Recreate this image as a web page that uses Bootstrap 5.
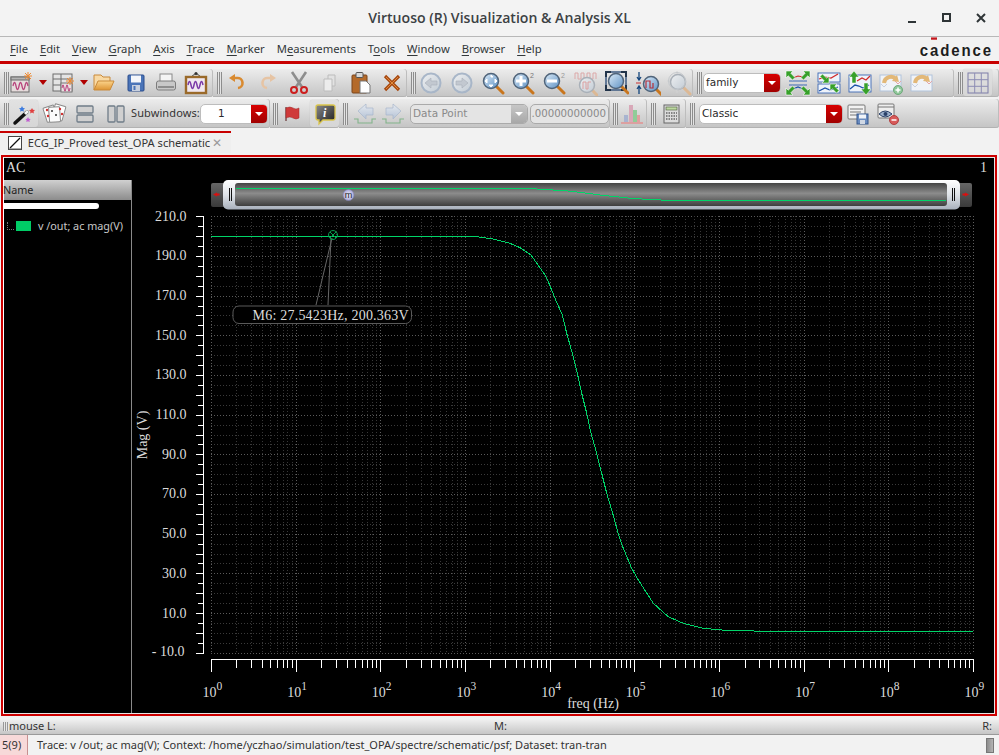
<!DOCTYPE html>
<html lang="en">
<head>
<meta charset="utf-8">
<title>Virtuoso (R) Visualization &amp; Analysis XL</title>
<link href="https://cdn.jsdelivr.net/npm/bootstrap@5.3.0/dist/css/bootstrap.min.css" rel="stylesheet">
<style>
html,body{width:999px;height:755px;overflow:hidden;margin:0;background:#f2f2f2;color:#2e3436;font-family:"Noto Sans","Open Sans",sans-serif;font-size:11.5px}
.defs-holder{position:absolute;width:0;height:0}
.titlebar{height:37px;border-bottom:1px solid #b8b8b8;background:#f3f3f3;padding-bottom:1px}
.wintitle{font-family:"Open Sans",sans-serif;font-weight:600;font-size:14.1px;color:#3c4143;flex:1;text-align:center}
.winbtns{position:absolute;right:0;top:0;height:36px;width:99px}
.winbtn{position:absolute;top:12px;width:12px;height:12px}
.winbtn.b1{left:7px}.winbtn.b2{left:41px}.winbtn.b3{left:75px}
.menubar{height:24px;background:#f2f2f2;padding:2px 0 0 10px}
.menuitem{margin-right:11.9px;color:#33383a;white-space:nowrap;font-size:11.25px}
.menuitem u{text-decoration-thickness:1px;text-underline-offset:2px}
.brand{margin-left:auto;margin-right:6px;font-family:"Liberation Sans",sans-serif;font-weight:700;font-size:15px;letter-spacing:1.9px;color:#1d1d1d;position:relative;line-height:1;transform:scaleY(1.15)}
.brand-a{position:relative}
.brand-a::before{content:"";position:absolute;left:1px;right:3px;top:-2px;height:2px;background:#c4161c}
.redbar{height:3px;background:#c80000}
.gap5{height:5px}
.tbrow{height:29px}
.tbrow2{height:29px;margin-top:2px}
.sec{height:100%;flex:none;background:linear-gradient(#ececec,#c4c4c4);border-radius:0 3px 3px 0;box-shadow:inset -1px 0 0 #bdbdbd,inset 0 -1px 0 #b2b2b2;display:flex;align-items:center}
.grip{width:5px;height:22px;margin-left:4px;flex:none;background:repeating-linear-gradient(90deg,#8d8d8d 0 1px,#e4e4e4 1px 2px)}
.gs{margin-left:3px}
.tool{flex:none;height:27px;padding:0;border:0;border-radius:3px;display:flex;align-items:center;justify-content:center;background:transparent}
.tool svg{display:block;flex:none}
.on{background:linear-gradient(#e2e2e2,#d6d6d6);box-shadow:0 0 1px #aaa}
.w18{width:18px}.w19{width:19px}.w20{width:20px}.w21{width:21px}.w24{width:24px}.w28{width:28px}.w29{width:29px}.w30{width:30px}.w31{width:31px}.sp7{width:7px;flex:none}.sp3{width:3px;flex:none}.sp1{width:1px;flex:none}.sp2{width:2px;flex:none}.sp4{width:4px;flex:none}
.s213{width:213px}.s194{width:194px}.s286{width:286px}.s261{width:261px}.s45{width:45px}
.s270{width:270px}.s69{width:69px}.s271{width:271px}.s37{width:37px}.s39{width:39px}.s313{width:313px}
.combo{height:20px;flex:none;background:#fff;border:1px solid #bdbdbd;border-radius:5px;display:flex;align-items:center;overflow:hidden;color:#2a2a2a;font-family:"DejaVu Sans",sans-serif;font-size:10.5px}
.combo-txt{flex:1;padding-left:2px;white-space:nowrap;overflow:hidden}
.caret-box{width:16px;height:100%;background:linear-gradient(#d80000,#a00000);display:flex;align-items:center;justify-content:center}
.caret-box i{display:block;width:0;height:0;border-left:4px solid transparent;border-right:4px solid transparent;border-top:4px solid #fff}
.c78{width:78px}.c68{width:68px}.c118{width:118px}.c144{width:144px}.c79{width:79px}
.dis{background:#e4e4e4;color:#8a8a8a;border-color:#aaa}
.dis .caret-box{background:linear-gradient(#c6c6c6,#a8a8a8)}
.spin{font-size:10.2px;justify-content:flex-end;padding-right:2px;white-space:nowrap}
.sublabel{width:68px;flex:none;font-size:11px;letter-spacing:.1px;color:#333;white-space:nowrap}
.tabrow{height:22px;margin-top:3px}
.doctab{width:231px;height:22px;border-top:2px solid #c80000;background:#efefef;padding-left:8px;font-size:11.1px;color:#333;white-space:nowrap}
.tabx{color:#9a9a9a;font-size:12px;margin-left:2px}
.frame{height:561px;margin:2px 2px 0 1px;border:2px solid #cc0000;background:#000}
.frame-in{height:100%;border:1px solid #e6e6e6;border-left-color:#fff;background:#000;display:flex;flex-direction:column}
.plothead{height:22px;flex:none;color:#ddd;font-family:"Liberation Serif",serif;font-size:14px;padding:0 7px 4px 2px}
.plotbody{flex:1;min-height:0}
.legend{width:128px;flex:none;border-right:1px solid #8a8a8a;color:#c8c8c8;font-size:10.8px}
.legend-h{height:20px;background:linear-gradient(#d0d0d0,#8c8c8c);color:#222;text-indent:-1px}
.legend-s{height:6px;width:95px;background:#fff;border-radius:0 3px 3px 0;margin-top:3px}
.legend-r{height:14px;margin-top:10px;padding-left:3px}
.tree{width:7px;height:8px;flex:none;border-left:1px dotted #777;border-bottom:1px dotted #777;margin-right:2px}
.swatch{width:15px;height:10px;background:#00cc66;margin-right:7px;flex:none}
.plotsvg{display:block;flex:1;width:862px;height:533px;background:#000}
.statA{height:17px;margin-top:2px;background:linear-gradient(#f4f4f4,#c6c6c6);border-bottom:1px solid #9a9a9a;font-size:11px;padding:0 7px 0 3px;color:#333}
.statL{width:491px;flex:none}
.statM{flex:1}
.sgrip{width:6px;height:9px;background:repeating-linear-gradient(90deg,#999 0 1px,#e8e8e8 1px 2px)}
.statB{height:20px;background:#f2f2f2;font-size:11px;color:#333}
.count{width:28px;height:100%;background:#f7d9d9;border-right:1px solid #c89090;padding-left:2px}
.statmsg{padding-left:9px;white-space:nowrap}
.endgrip{width:8px;height:15px;margin-left:auto;margin-right:5px;background:linear-gradient(90deg,#8c8c8c,#b4b4b4);border:1px solid #777}
</style>
</head>
<body class="d-flex flex-column">

<svg class="defs-holder" aria-hidden="true">
<defs>
<linearGradient id="lens" x1="0" y1="0" x2="1" y2="1"><stop offset="0" stop-color="#dcebf8"/><stop offset="1" stop-color="#5f92c4"/></linearGradient>
<linearGradient id="lensd" x1="0" y1="0" x2="1" y2="1"><stop offset="0" stop-color="#eef0f2"/><stop offset="1" stop-color="#c2cbd4"/></linearGradient>
<linearGradient id="orange" x1="0" y1="0" x2="0" y2="1"><stop offset="0" stop-color="#fbd48c"/><stop offset="1" stop-color="#dd9433"/></linearGradient>
<linearGradient id="blk" x1="0" y1="0" x2="1" y2="1"><stop offset="0" stop-color="#8a8a8a"/><stop offset="1" stop-color="#1c1c1c"/></linearGradient>
<linearGradient id="pale" x1="0" y1="0" x2="0" y2="1"><stop offset="0" stop-color="#e6eaf0"/><stop offset="1" stop-color="#b5c3d6"/></linearGradient>
<g id="mag"><line x1="15" y1="15" x2="22" y2="22" stroke="#c9761e" stroke-width="3" stroke-linecap="round"/><circle cx="10" cy="10" r="7.5" fill="url(#lens)" stroke="#50647a" stroke-width="1.500"/></g>
<g id="magd"><line x1="15" y1="15" x2="22" y2="22" stroke="#dcb894" stroke-width="3" stroke-linecap="round"/><circle cx="10" cy="10" r="7.5" fill="url(#lensd)" stroke="#a9b0b8" stroke-width="1.500"/></g>
<g id="navc"><circle cx="13" cy="13" r="9.5" fill="url(#lensd)" stroke="#a8b6c8" stroke-width="2"/></g>
<g id="curl"><path d="M6 13a7 7 0 0 1 12-4" fill="none" stroke="#e2b878" stroke-width="4"/><path d="M21 12l-7-1 5-6z" fill="#e2b878"/></g>
<path id="garrow" d="M0 0h7L4.800 2.200 9 6.500 6.500 9 2.200 4.800 0 7z" fill="#37a02a" stroke="#fff" stroke-width=".6"/>
</defs>
</svg>

<header class="titlebar d-flex align-items-center position-relative">
  <div class="wintitle">Virtuoso (R) Visualization &amp; Analysis XL</div>
  <div class="winbtns" aria-hidden="true">
    <svg class="winbtn b1" viewBox="0 0 12 12"><rect x="1" y="9" width="8" height="2" fill="#2e3436"/></svg>
    <svg class="winbtn b2" viewBox="0 0 12 12"><rect x="2" y="2" width="7" height="7" fill="none" stroke="#2e3436" stroke-width="2"/></svg>
    <svg class="winbtn b3" viewBox="0 0 12 12"><path d="M2 2l8 8M10 2l-8 8" stroke="#2e3436" stroke-width="2"/></svg>
  </div>
</header>

<nav class="menubar d-flex align-items-center">
  <span class="menuitem"><u>F</u>ile</span>
  <span class="menuitem"><u>E</u>dit</span>
  <span class="menuitem"><u>V</u>iew</span>
  <span class="menuitem"><u>G</u>raph</span>
  <span class="menuitem"><u>A</u>xis</span>
  <span class="menuitem"><u>T</u>race</span>
  <span class="menuitem"><u>M</u>arker</span>
  <span class="menuitem">M<u>e</u>asurements</span>
  <span class="menuitem">T<u>o</u>ols</span>
  <span class="menuitem"><u>W</u>indow</span>
  <span class="menuitem"><u>B</u>rowser</span>
  <span class="menuitem"><u>H</u>elp</span>
  <span class="brand">c<span class="brand-a">a</span>dence</span>
</nav>
<div class="redbar"></div>
<div class="gap5"></div>

<div class="tbrow d-flex">
  <div class="sec s213">
    <span class="grip"></span>
    <button class="tool w24" aria-label="New window"><svg width="24" height="24" viewBox="0 0 24 24"><rect x="2" y="6" width="18" height="15" fill="#e6dcdc" stroke="#6d6d6d"/><rect x="2" y="6" width="18" height="3" fill="#b4b4b4" stroke="#6d6d6d"/><path d="M4 15q1.5-7 3 0t3 0 3 0 3 0 3 0" fill="none" stroke="#b8457d" stroke-width="1.3"/><path d="M19 1v8M15 5h8M16 2l6 6M22 2l-6 6" stroke="#ee8a32" stroke-width="1"/></svg></button>
    <button class="tool w20" aria-label="Menu"><svg width="10" height="8" viewBox="0 0 10 8"><path d="M1 1h8L5 6z" fill="#b00000"/></svg></button>
    <button class="tool w21" aria-label="New subwindow"><svg width="24" height="24" viewBox="0 0 24 24"><rect x="1" y="3" width="19" height="17" fill="#e4e4e4" stroke="#6d6d6d"/><path d="M1 8h19M9 3v17M1 14h8" stroke="#6d6d6d"/><rect x="9" y="12" width="11" height="9" fill="#eadfe2" stroke="#777"/><path d="M10 17q1-6 2 0t2 0 2 0 2 0" fill="none" stroke="#b8457d" stroke-width="1.1"/><path d="M18 6v8M14 10h8M15 7l6 6M21 7l-6 6" stroke="#ee8a32" stroke-width="1"/></svg></button>
    <button class="tool w20" aria-label="Menu"><svg width="10" height="8" viewBox="0 0 10 8"><path d="M1 1h8L5 6z" fill="#b00000"/></svg></button>
    <button class="tool w19" aria-label="Open"><svg width="22" height="20" viewBox="0 0 22 20"><path d="M1 17V2h7l2 2h7v4" fill="#f8d9a4" stroke="#c98a3a"/><path d="M1 17l4-9h16l-4 9z" fill="url(#orange)" stroke="#c98a3a"/></svg></button>
    <span class="sp7"></span>
    <button class="tool w31" aria-label="Save"><svg width="20" height="20" viewBox="0 0 20 20"><rect x="2" y="2" width="16" height="16" rx="1" fill="#4a74b8" stroke="#2a4c8c"/><rect x="5" y="2.5" width="10" height="7" fill="#f4f6fa"/><rect x="6" y="12" width="8" height="6" fill="#c8d0de"/><rect x="7.5" y="13" width="2" height="4" fill="#4a74b8"/></svg></button>
    <button class="tool w30" aria-label="Print"><svg width="22" height="22" viewBox="0 0 22 22"><rect x="5" y="2" width="12" height="9" fill="#f4f4f4" stroke="#8a8a8a"/><rect x="1.500" y="9" width="19" height="9" rx="2" fill="#c8c8c8" stroke="#7c7c7c"/><rect x="3" y="14" width="16" height="2" fill="#8e8e8e"/></svg></button>
    <button class="tool w30" aria-label="Print plot"><svg width="24" height="24" viewBox="0 0 24 24"><path d="M7 6l5-4 5 4" fill="none" stroke="#444"/><circle cx="12" cy="2.500" r="1.500" fill="#333"/><rect x="2" y="6" width="20" height="16" fill="#f0e8f0" stroke="#9a6a2a" stroke-width="2.400"/><path d="M4 14q1.500-7 3 0t3 0 3 0 3 0 3 0" fill="none" stroke="#7b3aa8" stroke-width="1.500"/></svg></button>
  </div>
  <div class="sec s194">
    <span class="grip"></span>
    <button class="tool w30" aria-label="Undo"><svg width="20" height="20" viewBox="0 0 20 20"><path d="M7 5h3a5 5 0 0 1 1 10" fill="none" stroke="#d98a30" stroke-width="2.600"/><path d="M8 1v8L2 5z" fill="#d98a30"/></svg></button>
    <button class="tool w31" aria-label="Redo"><svg width="20" height="20" viewBox="0 0 20 20"><path d="M13 5h-3a5 5 0 0 0-1 10" fill="none" stroke="#e6c4a4" stroke-width="2.600"/><path d="M12 1v8l6-4z" fill="#e6c4a4"/></svg></button>
    <button class="tool w31" aria-label="Cut"><svg width="22" height="24" viewBox="0 0 22 24"><path d="M4 1l10 15M18 1L8 16" stroke="#8d8d8d" stroke-width="2.600"/><circle cx="6" cy="19" r="3" fill="none" stroke="#cc1e1e" stroke-width="2"/><circle cx="16" cy="19" r="3" fill="none" stroke="#cc1e1e" stroke-width="2"/></svg></button>
    <button class="tool w31" aria-label="Copy"><svg width="20" height="20" viewBox="0 0 20 20"><path d="M8 2h7v11H8z" fill="#e2e2e2" stroke="#bcbcbc"/><path d="M4 6h8v12H4z" fill="#ececec" stroke="#bcbcbc"/></svg></button>
    <button class="tool w31" aria-label="Paste"><svg width="22" height="24" viewBox="0 0 22 24"><rect x="2" y="4" width="15" height="18" rx="1" fill="#b46a2a" stroke="#7a441a"/><rect x="6" y="1.500" width="7" height="5" rx="1" fill="#d8d8d8" stroke="#555"/><path d="M10 10h6l4 4v8H10z" fill="#fff" stroke="#777"/></svg></button>
    <button class="tool w31" aria-label="Delete"><svg width="18" height="18" viewBox="0 0 18 18"><path d="M2 2l14 14M16 2L2 16" stroke="#a84a12" stroke-width="3.200"/><path d="M3 3l12 12M15 3L3 15" stroke="#e08a3c" stroke-width="1"/></svg></button>
  </div>
  <div class="sec s286">
    <span class="grip"></span>
    <button class="tool w30" aria-label="Back"><svg width="26" height="26" viewBox="0 0 26 26"><use href="#navc"/><path d="M7 13l6-5v3h6v4h-6v3z" fill="#c2c8d0" stroke="#a8aeb8" stroke-width=".6"/></svg></button>
    <button class="tool w31" aria-label="Forward"><svg width="26" height="26" viewBox="0 0 26 26"><use href="#navc"/><path d="M19 13l-6-5v3H7v4h6v3z" fill="#c2c8d0" stroke="#a8aeb8" stroke-width=".6"/></svg></button>
    <button class="tool w31" aria-label="Zoom fit"><svg width="24" height="24" viewBox="0 0 24 24"><use href="#mag"/><path d="M10 4l2 2-2 0zM10 16l-2-2h4zM4 10l2-2v4zM16 10l-2 2V8z" fill="#fff" stroke="#fff"/></svg></button>
    <button class="tool w31" aria-label="Zoom in"><svg width="26" height="24" viewBox="0 0 26 24"><use href="#mag"/><path d="M5 10h10M10 5v10" stroke="#fff" stroke-width="3"/><text x="19" y="7" font-size="7" fill="#777" font-family="Liberation Sans">2</text></svg></button>
    <button class="tool w31" aria-label="Zoom out"><svg width="26" height="24" viewBox="0 0 26 24"><use href="#mag"/><path d="M5 10h10" stroke="#fff" stroke-width="3"/><text x="19" y="7" font-size="7" fill="#999" font-family="Liberation Sans">2</text></svg></button>
    <button class="tool w31" aria-label="Zoom pulse"><svg width="24" height="26" viewBox="0 0 24 26"><path d="M1 9V3h3v6h3V3h3v6h3V3h3v6h3V3h3v6" fill="none" stroke="#dca8a8"/><g transform="translate(3 5)"><use href="#magd"/><path d="M6 14V7h3v7h2V7h3" fill="none" stroke="#dca0a0"/></g></svg></button>
    <button class="tool w31" aria-label="Fit"><svg width="24" height="24" viewBox="0 0 24 24"><rect x="1" y="1" width="20" height="18" fill="none" stroke="#3c5a80" stroke-width="1.500"/><path d="M1 6V1h5M16 1h5v5M1 14v5h5M21 14v5h-5" fill="none" stroke="#22344a" stroke-width="2"/><g transform="translate(1 0)"><use href="#mag"/></g></svg></button>
    <button class="tool w31" aria-label="Zoom Y"><svg width="26" height="26" viewBox="0 0 26 26"><path d="M4 2v7M2 7l2 3 2-3M4 24v-7M2 19l2-3 2 3" stroke="#15457c" fill="none" stroke-width="1.300"/><path d="M1 13h5" stroke="#c83030"/><g transform="translate(6 4)"><use href="#mag"/><path d="M5 14v-3V7h4v7h3V9" fill="none" stroke="#b5303a" stroke-width="1.200"/></g></svg></button>
    <button class="tool w31" aria-label="Zoom cross"><svg width="26" height="26" viewBox="0 0 26 26"><path d="M11 1v22M1 11h20" stroke="#d2d2d2"/><g transform="translate(2 2)"><use href="#magd"/></g><circle cx="11" cy="11" r="8.500" fill="none" stroke="#c4c8cc"/></svg></button>
  </div>
  <div class="sec s261">
    <span class="grip"></span>
    <span class="sp1"></span>
    <div class="combo c78"><span class="combo-txt">family</span><span class="caret-box"><i></i></span></div>
    <span class="sp1"></span>
    <button class="tool w31" aria-label="Split traces"><svg width="26" height="26" viewBox="0 0 26 26"><path d="M4 11h18M4 15h18" stroke="#3c68b4"/><path d="M8 8l5-2 5 1" fill="none" stroke="#d02a2a" stroke-width="1.200"/><path d="M8 19l5-2 5 2" fill="none" stroke="#1b50a8" stroke-width="1.200"/><use href="#garrow" transform="translate(1 1)"/><use href="#garrow" transform="translate(25 1) scale(-1 1)"/><use href="#garrow" transform="translate(1 25) scale(1 -1)"/><use href="#garrow" transform="translate(25 25) scale(-1 -1)"/></svg></button>
    <button class="tool w31" aria-label="Merge traces"><svg width="26" height="26" viewBox="0 0 26 26"><rect x="2" y="3" width="22" height="9" fill="#eef3fa" stroke="#3c68b4" stroke-width=".9"/><rect x="2" y="14" width="22" height="9" fill="#eef3fa" stroke="#3c68b4" stroke-width=".9"/><path d="M3 9l6-2 6 1 7-4" fill="none" stroke="#d02a2a" stroke-width="1.200"/><path d="M3 21l6-3 5 2 8-3" fill="none" stroke="#1b50a8" stroke-width="1.200"/><use href="#garrow" transform="translate(13 13) scale(-1 -1)"/><use href="#garrow" transform="translate(14 14)"/></svg></button>
    <button class="tool w31" aria-label="Scale traces"><svg width="26" height="26" viewBox="0 0 26 26"><rect x="2" y="5" width="22" height="17" fill="#eef3fa" stroke="#3c68b4" stroke-width=".9"/><path d="M10 11l5-3 4 2 4-4" fill="none" stroke="#d02a2a" stroke-width="1.300"/><path d="M3 19l5-4 4 1 4 2 6-3" fill="none" stroke="#1b50a8" stroke-width="1.300"/><path d="M7 1l5 6H9v6H5V7H2z" fill="#37a02a" stroke="#fff" stroke-width=".5"/><path d="M19 25l5-6h-3v-6h-4v6h-3z" fill="#37a02a" stroke="#fff" stroke-width=".5"/></svg></button>
    <button class="tool w31" aria-label="Add trace"><svg width="26" height="26" viewBox="0 0 26 26"><rect x="2" y="5" width="21" height="16" fill="#f0f3f8" stroke="#b2c4dc"/><path d="M3 14l3 3 3-3" fill="none" stroke="#c8d0e0"/><path d="M17 11l3 3 3-3" fill="none" stroke="#e6a6a6"/><use href="#curl"/><circle cx="20" cy="20" r="4.500" fill="#8fc79a" stroke="#6ea87a"/><path d="M17.500 20h5M20 17.500v5" stroke="#fff" stroke-width="1.500"/></svg></button>
    <button class="tool w31" aria-label="Move trace"><svg width="26" height="26" viewBox="0 0 26 26"><rect x="2" y="5" width="21" height="16" fill="#f0f3f8" stroke="#b2c4dc"/><path d="M3 14l3 3 3-3" fill="none" stroke="#c8d0e0"/><path d="M17 11l3 3 3-3" fill="none" stroke="#e6a6a6"/><use href="#curl"/></svg></button>
  </div>
  <div class="sec s45">
    <span class="grip"></span>
    <button class="tool w29 on" aria-label="Grid"><svg width="24" height="24" viewBox="0 0 24 24"><rect x="2" y="2" width="20" height="20" fill="none" stroke="#7d7da8"/><path d="M8.700 2v20M15.300 2v20M2 8.700h20M2 15.300h20" stroke="#8d8db4"/></svg></button>
  </div>
</div>

<div class="tbrow2 d-flex">
  <div class="sec s270">
    <span class="grip"></span>
    <button class="tool w29 on" aria-label="Wand"><svg width="24" height="24" viewBox="0 0 24 24"><path d="M3 21L15 10" stroke="#111" stroke-width="3.500" stroke-linecap="round"/><path d="M13 12l3-3" stroke="#f4f4f4" stroke-width="3"/><path d="M10 4l1 2 2 .3-1.500 1.400.4 2-1.900-1-1.900 1 .4-2L7 6.300 9 6z" fill="#3c7ce0"/><path d="M20 6l1 1.800 2 .3-1.500 1.400.4 2-1.900-1-1.900 1 .4-2L17 8.100l2-.3z" fill="#e04040"/><path d="M16 15l.9 1.700 1.800.3-1.300 1.300.3 1.800-1.700-.9-1.700.9.3-1.800-1.300-1.300 1.800-.3z" fill="#c05cd0"/></svg></button>
    <button class="tool w31" aria-label="Cards"><svg width="26" height="24" viewBox="0 0 26 24"><rect x="4" y="4" width="11" height="15" rx="1" fill="#fff" stroke="#8a8a8a" transform="rotate(-18 10 12)"/><rect x="12" y="3" width="11" height="15" rx="1" fill="#fff" stroke="#8a8a8a" transform="rotate(16 18 11)"/><rect x="8" y="5" width="11" height="15" rx="1" fill="#fbfbfb" stroke="#8a8a8a" transform="rotate(-4 13 12)"/><circle cx="11" cy="9" r="1" fill="#333"/><circle cx="15" cy="13" r="1" fill="#333"/><circle cx="19" cy="7" r="1.200" fill="#d03030"/><circle cx="21" cy="12" r="1.200" fill="#d03030"/><circle cx="6" cy="8" r="1.200" fill="#d03030"/><circle cx="7" cy="14" r="1.200" fill="#d03030"/></svg></button>
    <button class="tool w31" aria-label="Rows"><svg width="20" height="20" viewBox="0 0 20 20"><rect x="2" y="2" width="16" height="7" rx="1" fill="#d0d0d0" stroke="#6f7c88" stroke-width="1.300"/><rect x="2" y="11" width="16" height="7" rx="1" fill="#d0d0d0" stroke="#6f7c88" stroke-width="1.300"/></svg></button>
    <button class="tool w31" aria-label="Columns"><svg width="20" height="20" viewBox="0 0 20 20"><rect x="2" y="2" width="7" height="16" rx="1" fill="#d0d0d0" stroke="#6f7c88" stroke-width="1.300"/><rect x="11" y="2" width="7" height="16" rx="1" fill="#d0d0d0" stroke="#6f7c88" stroke-width="1.300"/></svg></button>
    <span class="sublabel">Subwindows:</span>
    <span class="sp1"></span>
    <div class="combo c68"><span class="combo-txt text-center pe-3">1</span><span class="caret-box"><i></i></span></div>
  </div>
  <div class="sec s69">
    <span class="grip gs"></span>
    <button class="tool w28" aria-label="Flag"><svg width="18" height="18" viewBox="0 0 18 18"><path d="M3 2v14" stroke="#7a5050" stroke-width="1.500"/><path d="M3 3q4-2 7 0t6 0v10q-3 2-6 0t-7 0z" fill="#cf3a3a" stroke="#a02a2a" stroke-width=".5"/></svg></button>
    <span class="sp4"></span>
    <button class="tool w29 on" aria-label="Info"><svg width="24" height="24" viewBox="0 0 24 24"><path d="M5 3h15a2 2 0 0 1 2 2v11a2 2 0 0 1-2 2H10l-4 4v-4H5a2 2 0 0 1-2-2V5a2 2 0 0 1 2-2z" fill="url(#blk)" stroke="#d9c44a" stroke-width="1.300"/><text x="10" y="15" font-size="12" font-weight="700" font-style="italic" fill="#fff" font-family="Liberation Serif">i</text></svg></button>
  </div>
  <div class="sec s271">
    <span class="grip"></span>
    <span class="sp3"></span>
    <button class="tool w28" aria-label="Previous"><svg width="24" height="22" viewBox="0 0 24 22"><path d="M5 8l8-7v4h7v7h-7v4z" fill="url(#pale)" stroke="#a8b6cc" stroke-width=".7"/><path d="M1 16h4v4h14v-4h4" fill="none" stroke="#82b48a" stroke-width="1.100"/></svg></button>
    <button class="tool w28" aria-label="Next"><svg width="24" height="22" viewBox="0 0 24 22"><path d="M20 8l-8-7v4H5v7h7v4z" fill="url(#pale)" stroke="#a8b6cc" stroke-width=".7"/><path d="M1 16h4v4h14v-4h4" fill="none" stroke="#82b48a" stroke-width="1.100"/></svg></button>
    <span class="sp3"></span>
    <div class="combo c118 dis"><span class="combo-txt">Data Point</span><span class="caret-box"><i></i></span></div>
    <span class="sp2"></span>
    <div class="combo c79 dis spin"><span>.00000000000</span></div>
  </div>
  <div class="sec s37">
    <span class="grip ms-1"></span>
    <button class="tool w28" aria-label="Histogram"><svg width="24" height="24" viewBox="0 0 24 24"><rect x="4" y="13" width="4" height="7" fill="#a8b4d0"/><rect x="9" y="3" width="4" height="17" fill="#d8a8b8"/><rect x="13" y="8" width="4" height="12" fill="#90cc98"/><rect x="17" y="13" width="3" height="7" fill="#e0a0a0"/><rect x="1" y="20" width="22" height="2" fill="#dca0a0"/></svg></button>
  </div>
  <div class="sec s39">
    <span class="grip"></span>
    <button class="tool w30" aria-label="Calculator"><svg width="20" height="20" viewBox="0 0 20 20"><rect x="3" y="1" width="15" height="18" fill="#dcdcdc" stroke="#666"/><rect x="5" y="3" width="11" height="3" fill="#bcd8a0" stroke="#4a5a3a" stroke-width=".6"/><path d="M5 9h11M5 12h11M5 15h11" stroke="#666" stroke-width="1.500" stroke-dasharray="1.500 1"/></svg></button>
  </div>
  <div class="sec s313">
    <span class="grip"></span>
    <span class="sp4"></span>
    <div class="combo c144"><span class="combo-txt">Classic</span><span class="caret-box"><i></i></span></div>
    <button class="tool w30" aria-label="Save template"><svg width="24" height="24" viewBox="0 0 24 24"><rect x="2" y="3" width="17" height="14" rx="1" fill="#f2f2f2" stroke="#777"/><path d="M4 7h13M4 10h11M4 13h8" stroke="#777"/><rect x="11" y="12" width="11" height="10" fill="#6a8cc0" stroke="#34568c"/><rect x="13" y="12.500" width="7" height="4" fill="#f0f3f8"/><rect x="14" y="18" width="5" height="4" fill="#d0d8e4"/></svg></button>
    <button class="tool w30" aria-label="Hide"><svg width="24" height="24" viewBox="0 0 24 24"><rect x="2" y="2" width="16" height="14" rx="1" fill="#eee" stroke="#777"/><path d="M2 5h16" stroke="#777"/><path d="M3 12q6-6 13 0-7 6-13 0z" fill="#9cb0cc" stroke="#2a4068"/><circle cx="9.500" cy="12" r="2" fill="#2a4068"/><circle cx="18" cy="18" r="4.500" fill="#d85a5a" stroke="#b04040"/><path d="M15.500 18h5" stroke="#fff" stroke-width="1.500"/></svg></button>
  </div>
</div>

<div class="tabrow d-flex">
  <div class="doctab d-flex align-items-center">
    <svg class="me-2" width="14" height="14" viewBox="0 0 14 14"><rect x=".5" y=".5" width="13" height="13" fill="#fff" stroke="#444"/><path d="M2 12L12 2" stroke="#111" stroke-width="1.300"/><path d="M1 13h12" stroke="#555"/></svg>
    <span>ECG_IP_Proved test_OPA schematic</span><span class="tabx">✕</span>
  </div>
</div>

<main class="frame">
  <div class="frame-in">
    <div class="plothead d-flex align-items-center justify-content-between"><span>AC</span><span>1</span></div>
    <div class="plotbody d-flex">
      <aside class="legend">
        <div class="legend-h d-flex align-items-center">Name</div>
        <div class="legend-s"></div>
        <div class="legend-r d-flex align-items-center"><span class="tree"></span><span class="swatch"></span><span>v /out; ac mag(V)</span></div>
      </aside>
      <svg id="plot" class="plotsvg" viewBox="132 180 862 533" font-family="Liberation Serif, serif" font-size="14" fill="#dcdcdc"></svg>
    </div>
  </div>
</main>

<div class="statA d-flex align-items-center">
  <span class="statL d-flex align-items-center"><span class="sgrip"></span>mouse L:</span><span class="statM">M:</span><span>R:</span>
</div>
<footer class="statB d-flex align-items-center">
  <span class="count d-flex align-items-center">5(9)</span>
  <span class="statmsg">Trace: v /out; ac mag(V); Context: /home/yczhao/simulation/test_OPA/spectre/schematic/psf; Dataset: tran-tran</span>
  <span class="endgrip"></span>
</footer>

<script>
(function(){
  var x0=211,dec=84.67,yTop=216.3,yBot=652.7,s=[];
  var X=function(v){return x0+v*dec};
  function L(a,b,c,d,col,extra){s.push('<line x1="'+a+'" y1="'+b+'" x2="'+c+'" y2="'+d+'" stroke="'+col+'" '+(extra||'')+'/>')}
  var dot='stroke-dasharray="1 2" shape-rendering="crispEdges"',crisp='shape-rendering="crispEdges"';
  for(var i=0;i<=44;i++){var y=Math.round(yTop+i*(yBot-yTop)/44)+.5;L(x0,y,973,y,(i%4==0)?'#5a5a5a':'#3a3a3a',dot)}
  for(var d=0;d<=9;d++){
    var mx=Math.round(X(d))+.5;L(mx,yTop,mx,yBot,'#5e5e5e',dot);
    if(d<9)for(var m=2;m<10;m++){var px=Math.round(X(d+Math.log10(m)))+.5;L(px,yTop,px,yBot,'#383838',dot)}
  }
  L(203.5,yTop,203.5,yBot,'#fff',crisp);
  for(i=0;i<=44;i++){y=Math.round(yTop+i*(yBot-yTop)/44)+.5;L(i%2?198:196,y,204,y,'#fff',crisp)}
  var labs=['210.0','190.0','170.0','150.0','130.0','110.0','90.0','70.0','50.0','30.0','10.0'];
  labs.forEach(function(t,k){s.push('<text x="186.5" y="'+(yTop+k*39.67+4.5)+'" text-anchor="end">'+t+'</text>')});
  s.push('<text x="184.5" y="'+(yBot+3.5)+'" text-anchor="end">- 10.0</text>');
  s.push('<text x="0" y="0" transform="translate(146.5 435) rotate(-90)" text-anchor="middle">Mag (V)</text>');
  L(x0,659.5,973.5,659.5,'#fff',crisp);
  for(d=0;d<=9;d++){
    mx=Math.round(X(d))+.5;L(mx,659,mx,672,'#fff',crisp);
    if(d<9)for(m=2;m<10;m++){px=Math.round(X(d+Math.log10(m)))+.5;L(px,659,px,668,'#fff',crisp)}
    s.push('<text x="'+(X(d)-8.5)+'" y="697">10<tspan dy="-7" font-size="11.5">'+d+'</tspan></text>');
  }
  s.push('<text x="593" y="708" text-anchor="middle">freq (Hz)</text>');
  var pts=[[211,236.5],[460,236.5],[476.7,236.7],[493.3,239],[510,243.3],[520,247.7],[531,255],[545,275],[548.3,281.7],[555,298.3],[562.3,315],[566.7,333.3],[572.3,353.3],[577.3,373.3],[581.7,393.3],[586.7,413.3],[591,433.3],[596.7,453.3],[601.7,473.3],[606.7,493.3],[612.7,513.3],[617.7,531.7],[622.7,546.7],[631.7,568.3],[638.3,580],[653.3,603.3],[668.3,616.7],[683.3,623.3],[703.3,628.3],[721.7,630],[750,630.7],[760,631.5],[973,631.5]];
  s.push('<polyline points="'+pts.join(' ')+'" fill="none" stroke="#00d468" stroke-width="1" '+crisp+'/>');
  s.push('<line x1="332" y1="238" x2="316" y2="305" stroke="#666"/><line x1="331" y1="238" x2="328" y2="305" stroke="#666"/>');
  s.push('<circle cx="333" cy="235" r="4.5" fill="none" stroke="#0a9a50"/><path d="M330 232l6 6M336 232l-6 6" stroke="#0a9a50"/>');
  s.push('<rect x="233" y="306" width="178.500" height="17.500" rx="6" fill="#000" stroke="#5a5a5a"/>');
  s.push('<text x="252.500" y="320" letter-spacing=".22" fill="#dcdcdc">M6: 27.5423Hz, 200.363V</text>');
  s.push('<defs><linearGradient id="ov" x1="0" y1="0" x2="0" y2="1"><stop offset="0" stop-color="#444"/><stop offset=".45" stop-color="#8c8c8c"/><stop offset="1" stop-color="#3e3e3e"/></linearGradient>'+
    '<linearGradient id="ovf" x1="0" y1="0" x2="0" y2="1"><stop offset="0" stop-color="#fff"/><stop offset=".5" stop-color="#dfe3e8"/><stop offset="1" stop-color="#a8b0bc"/></linearGradient>'+
    '<linearGradient id="cap" x1="0" y1="0" x2="0" y2="1"><stop offset="0" stop-color="#666"/><stop offset="1" stop-color="#3a3a3a"/></linearGradient>'+
    '<radialGradient id="mb"><stop offset="0" stop-color="#f4f4ff"/><stop offset="1" stop-color="#a8a8d8"/></radialGradient></defs>');
  s.push('<rect x="211" y="183" width="14" height="24" rx="2" fill="url(#cap)"/><rect x="958" y="183" width="14" height="24" rx="2" fill="url(#cap)"/>');
  s.push('<path d="M213 194.500l4-2v1h2.500v2H217v1z" fill="#d81010"/><path d="M969 194.500l-4-2v1h-2.500v2h2.500v1z" fill="#d81010"/>');
  s.push('<rect x="223" y="180" width="737" height="29.500" rx="5" fill="url(#ovf)"/>');
  s.push('<rect x="235" y="183" width="712" height="23" rx="3" fill="url(#ov)"/>');
  L(229,188,229,201,'#111',crisp);L(231,188,231,201,'#111',crisp);
  L(952.5,188,952.5,201,'#111',crisp);L(954.5,188,954.5,201,'#111',crisp);
  s.push('<polyline points="236,188.500 528,188.500 545,189.500 568,191 585,193 600,195 628,198 642,199 671,200.500 946,200.500" fill="none" stroke="#00d468" '+crisp+'/>');
  s.push('<circle cx="348.500" cy="195" r="5.500" fill="url(#mb)" stroke="#8080b0" stroke-width=".6"/><text x="348.500" y="198" font-size="9" font-family="Liberation Sans" text-anchor="middle" fill="#222">m</text>');
  document.getElementById('plot').innerHTML=s.join('');
})();
</script>
<script src="https://cdn.jsdelivr.net/npm/bootstrap@5.3.0/dist/js/bootstrap.bundle.min.js"></script>
</body>
</html>
